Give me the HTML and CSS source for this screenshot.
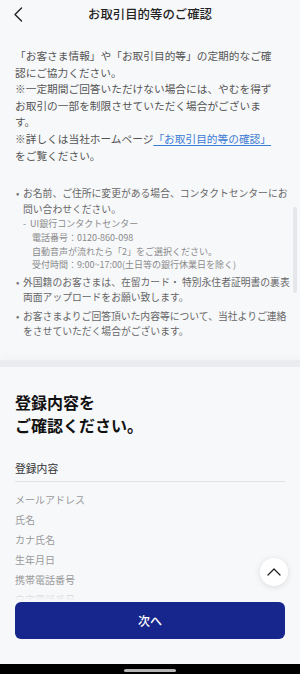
FILE: index.html
```html
<!DOCTYPE html>
<html lang="ja">
<head>
    <meta charset="UTF-8">
    <meta name="viewport" content="width=device-width, initial-scale=1.0">
    <title>お取引目的等のご確認</title>
    <link rel="stylesheet" href="styles.css">
</head>
<body>
    <div class="app">
        <header class="top-bar">
            <button class="back-btn" aria-label="戻る">
                <svg width="10" height="15" viewBox="0 0 10 15">
                    <path d="M8.5 1 L2 7.5 L8.5 14" fill="none" stroke="#222" stroke-width="1.4" stroke-linecap="round" stroke-linejoin="round"/>
                </svg>
            </button>
            <h1 class="top-title">お取引目的等のご確認</h1>
        </header>

        <main class="content">
            <section class="notice">
                <p class="lead">
                    「お客さま情報」や「お取引目的等」の定期的なご確<br>
                    認にご協力ください。<br>
                    ※一定期間ご回答いただけない場合には、やむを得ず<br>
                    お取引の一部を制限させていただく場合がございま<br>
                    す。<br>
                    ※詳しくは当社ホームページ<a href="#" class="link">「お取引目的等の確認」</a><br>
                    をご覧ください。
                </p>
                <ul class="points">
                    <li>
                        お名前、ご住所に変更がある場合、コンタクトセンターにお<br>問い合わせください。
                        <div class="contact">
                            <p class="contact-name">UI銀行コンタクトセンター</p>
                            <p>電話番号：0120-860-098</p>
                            <p>自動音声が流れたら「2」をご選択ください。</p>
                            <p>受付時間：9:00~17:00(土日等の銀行休業日を除く)</p>
                        </div>
                    </li>
                    <li>外国籍のお客さまは、在留カード・ 特別永住者証明書の裏表<br>両面アップロードをお願い致します。</li>
                    <li>お客さまよりご回答頂いた内容等について、当社よりご連絡<br>をさせていただく場合がございます。</li>
                </ul>
                <div class="scroll-thumb"></div>
            </section>

            <div class="band"></div>

            <section class="confirm">
                <h2 class="confirm-title">登録内容を<br>ご確認ください。</h2>
                <h3 class="group-label">登録内容</h3>
                <ul class="fields">
                    <li>メールアドレス</li>
                    <li>氏名</li>
                    <li>カナ氏名</li>
                    <li>生年月日</li>
                    <li>携帯電話番号</li>
                    <li>自宅電話番号</li>
                    <li>郵便番号</li>
                </ul>
            </section>
        </main>

        <button class="to-top" aria-label="ページ上部へ">
            <svg width="14" height="8" viewBox="0 0 14 8">
                <path d="M1 7 L7 1 L13 7" fill="none" stroke="#222" stroke-width="1.3" stroke-linecap="round" stroke-linejoin="round"/>
            </svg>
        </button>

        <div class="footer">
            <button class="next-btn">次へ</button>
        </div>

        <div class="nav-bar"><span class="home-pill"></span></div>
    </div>
</body>
</html>
```

FILE: styles.css
```css
* {
    box-sizing: border-box;
}
body {
    margin: 0;
    padding: 0;
    background-color: #f7f8fa;
    font-family: "Noto Sans CJK JP", "Noto Sans", sans-serif;
    color: #222;
}
.app {
    position: relative;
    width: 300px;
    height: 674px;
    display: flex;
    flex-direction: column;
    overflow: hidden;
}
.top-bar {
    height: 28px;
    flex-shrink: 0;
    display: flex;
    align-items: center;
    justify-content: center;
    position: relative;
}
.back-btn {
    position: absolute;
    left: 13px;
    top: 7px;
    padding: 0;
    border: none;
    background: none;
}
.top-title {
    margin: 0;
    font-size: 12.4px;
    font-weight: 500;
    line-height: 28px;
    color: #222;
}
.content {
    flex: 1;
    overflow: hidden;
}
.notice {
    position: relative;
    padding: 20px 8px 20px 15px;
}
.lead {
    margin: 0;
    font-size: 10.7px;
    line-height: 16.6px;
    color: #555;
    white-space: nowrap;
}
.link {
    color: #3d7cd4;
    text-decoration: underline;
    text-underline-offset: 2px;
}
.points {
    list-style: none;
    margin: 22px 0 0;
    padding: 0 0 0 8px;
    font-size: 9.8px;
    line-height: 15.5px;
    color: #666;
    white-space: nowrap;
}
.points li {
    position: relative;
    margin-bottom: 3px;
}
.points li:last-child {
    margin-bottom: 0;
}
.points li::before {
    content: "•";
    position: absolute;
    left: -7px;
    top: 0;
    color: #777;
}
.contact {
    padding-left: 9px;
    font-size: 9px;
    line-height: 13.7px;
    color: #8a8a8a;
}
.contact p {
    margin: 0;
}
.contact-name::before {
    content: "-";
    display: inline-block;
    width: 7px;
    margin-left: -9px;
}
.scroll-thumb {
    position: absolute;
    right: 3px;
    top: 179px;
    width: 4px;
    height: 86px;
    border-radius: 2px;
    background-color: #e6e7ea;
}
.band {
    height: 7px;
    background-color: #ebecef;
    box-shadow: 0 -4px 6px rgba(0, 0, 0, 0.02);
}
.confirm {
    padding: 24px 15px 0;
}
.confirm-title {
    margin: 0;
    font-size: 16px;
    font-weight: bold;
    line-height: 23.5px;
    color: #111;
}
.group-label {
    margin: 22px 0 0;
    padding-bottom: 5px;
    border-bottom: 1px solid #e3e4e7;
    font-size: 10.8px;
    font-weight: normal;
    line-height: 16px;
    color: #333;
}
.fields {
    list-style: none;
    margin: 8px 0 0;
    padding: 0;
    font-size: 10px;
    line-height: 20px;
    color: #9a9a9a;
}
.to-top {
    position: absolute;
    right: 12px;
    bottom: 88px;
    width: 28px;
    height: 28px;
    padding: 0;
    border: none;
    border-radius: 50%;
    background-color: #fff;
    box-shadow: 0 1px 6px rgba(0, 0, 0, 0.12);
    display: flex;
    align-items: center;
    justify-content: center;
    z-index: 2;
}
.footer {
    position: absolute;
    left: 0;
    right: 0;
    bottom: 10px;
    padding: 12px 15px 25px;
    background: linear-gradient(to bottom, rgba(247, 248, 250, 0) 0, rgba(247, 248, 250, 0.9) 8px, #f7f8fa 12px);
}
.next-btn {
    display: block;
    width: 100%;
    height: 37px;
    border: none;
    border-radius: 6px;
    background-color: #16268c;
    color: #fff;
    font-family: inherit;
    font-size: 12px;
    font-weight: 500;
}
.nav-bar {
    height: 10px;
    flex-shrink: 0;
    background-color: #000;
    display: flex;
    justify-content: center;
    padding-top: 5px;
    position: relative;
    z-index: 3;
}
.home-pill {
    width: 52px;
    height: 2.5px;
    border-radius: 2px;
    background-color: #b5b5b5;
}
```
